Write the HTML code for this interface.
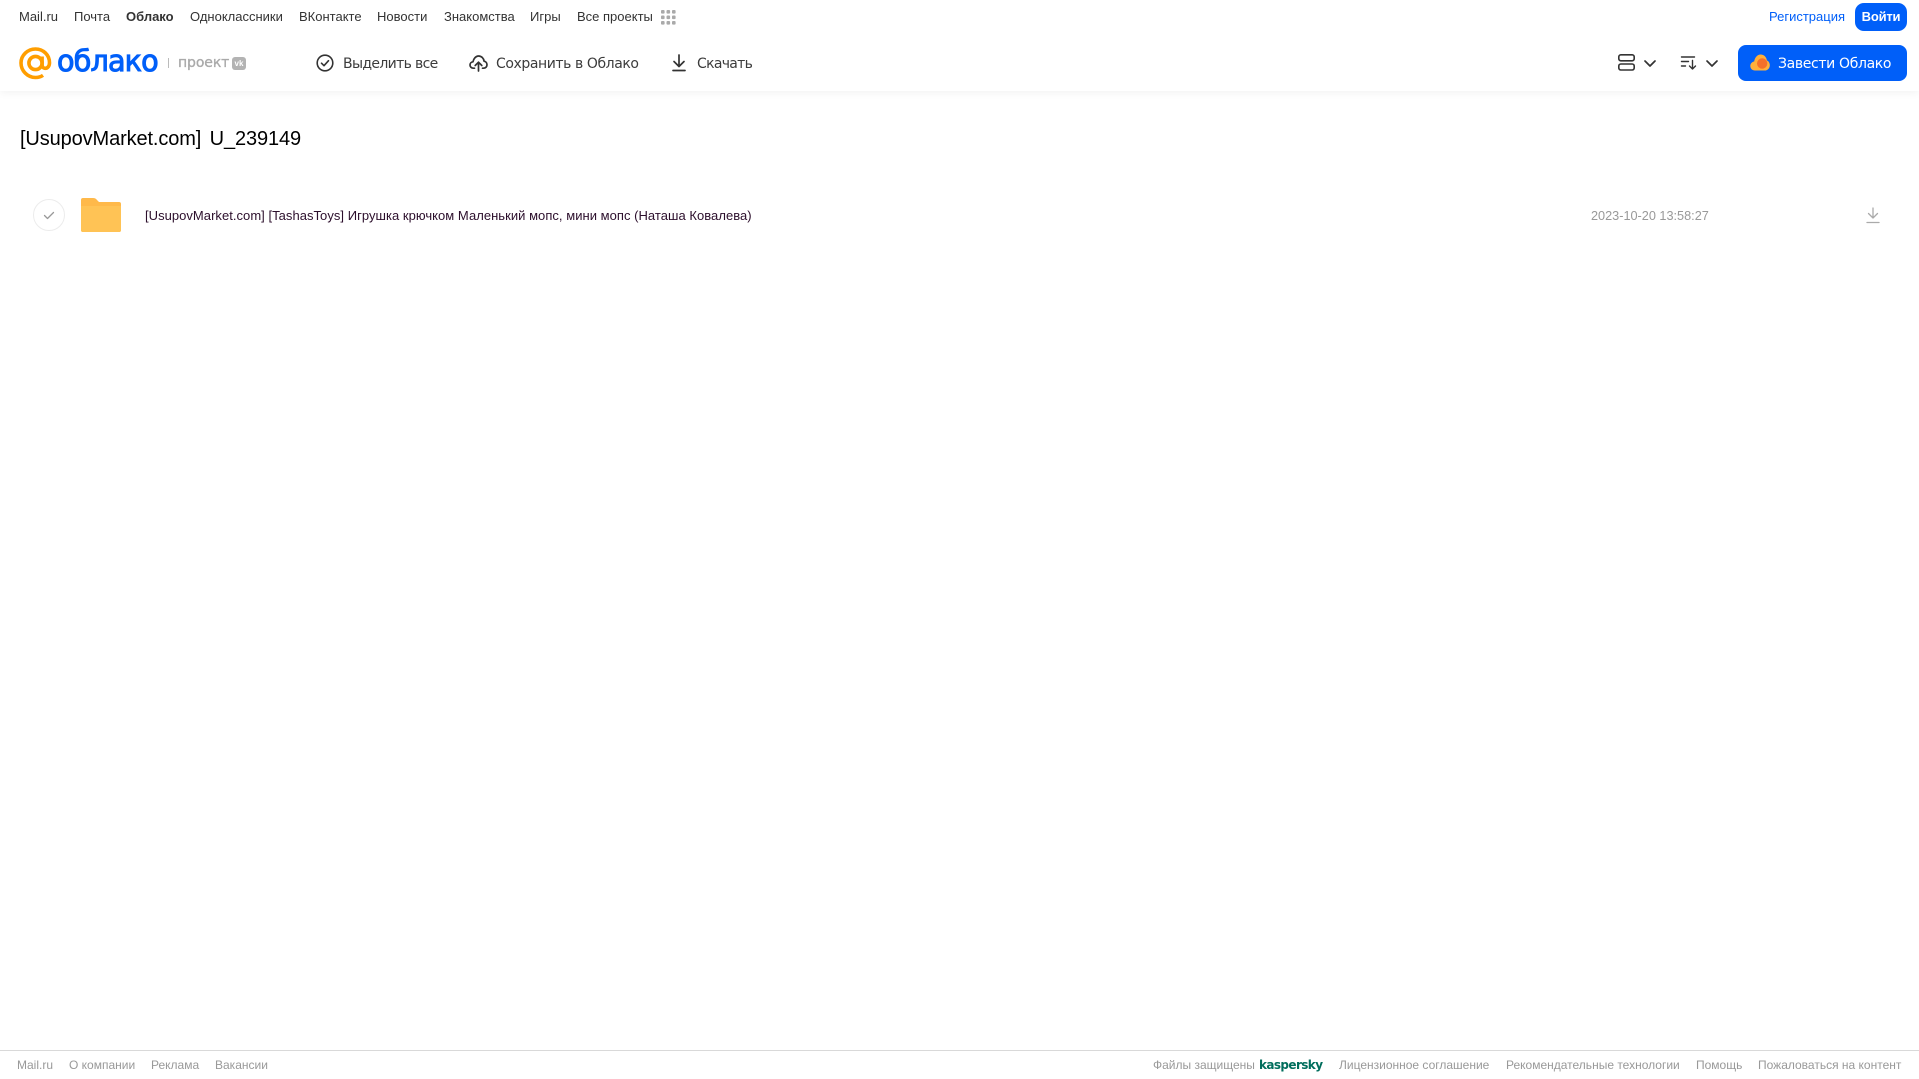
<!DOCTYPE html>
<html lang="ru"><head><meta charset="utf-8"><title>Облако</title>
<style>
html,body{margin:0;padding:0;background:#fff;width:1919px;height:1079px;overflow:hidden}
body{position:relative;font-family:"Liberation Sans",sans-serif}
.t{position:absolute;white-space:nowrap;line-height:20px;height:20px}
.n{font-size:13px;color:#333;top:7px}
.a{font-family:"DejaVu Sans",sans-serif;font-size:14px;color:#3c3c3c;top:54px;letter-spacing:-.35px}
.f{font-size:12px;color:#999;top:1055px}
svg{position:absolute;overflow:visible}
#hdr{position:absolute;left:0;top:0;width:1919px;height:91px;background:#fff;box-shadow:0 2px 8px rgba(0,0,0,.05)}
</style></head><body>
<div id="hdr"></div>
<span class="t n" style="left:19px">Mail.ru</span>
<span class="t n" style="left:74px">Почта</span>
<span class="t n" style="left:126px;font-weight:bold">Облако</span>
<span class="t n" style="left:190px">Одноклассники</span>
<span class="t n" style="left:299px">ВКонтакте</span>
<span class="t n" style="left:377px">Новости</span>
<span class="t n" style="left:444px">Знакомства</span>
<span class="t n" style="left:530px">Игры</span>
<span class="t n" style="left:577px">Все проекты</span>
<svg style="left:661px;top:10px" width="15" height="15" fill="#aaa"><rect x="0" y="0" width="3.6" height="3.6" rx="1"/><rect x="5.5" y="0" width="3.6" height="3.6" rx="1"/><rect x="11" y="0" width="3.6" height="3.6" rx="1"/><rect x="0" y="5.5" width="3.6" height="3.6" rx="1"/><rect x="5.5" y="5.5" width="3.6" height="3.6" rx="1"/><rect x="11" y="5.5" width="3.6" height="3.6" rx="1"/><rect x="0" y="11" width="3.6" height="3.6" rx="1"/><rect x="5.5" y="11" width="3.6" height="3.6" rx="1"/><rect x="11" y="11" width="3.6" height="3.6" rx="1"/></svg>
<span class="t n" style="left:1769px;color:#005ff9">Регистрация</span>
<div style="position:absolute;left:1855px;top:3px;width:52px;height:28px;border-radius:9px;background:#005ff9;color:#fff;font-size:13px;font-weight:bold;letter-spacing:-.2px;line-height:27px;text-align:center">Войти</div>

<svg style="left:19px;top:47px" width="33" height="33" viewBox="0 0 33 33" fill="none" stroke="#ff9e00" stroke-width="3.6"><circle cx="16.5" cy="16" r="6.6"/><path d="M23.1 9.5v8.2c0 2.2 1.3 3.6 3.2 3.6 2.3 0 4.2-2.3 4.2-5.6C30.5 8 24.3 2 16.5 2S2 8.3 2 16s6.4 14.5 14.5 14.5c3 0 5.5-.8 7.500-2.200"/></svg>
<span class="t" style="left:57px;top:46px;font:normal 29px/30px 'DejaVu Sans',sans-serif;height:30px;color:#005ff9;-webkit-text-stroke:1px #005ff9;letter-spacing:-.9px;transform-origin:0 50%;transform:scaleX(.99)">облако</span>
<div style="position:absolute;left:168px;top:58px;width:1px;height:10px;background:#bbb"></div>
<span class="t" style="left:178px;top:53px;font:normal 14px/20px 'DejaVu Sans',sans-serif;color:#aaa;-webkit-text-stroke:.35px #aaa;letter-spacing:-.1px">проект</span>
<div style="position:absolute;left:232px;top:57px;width:14px;height:13px;border-radius:3px;background:#b3b3b3;color:#fff;font:bold 8px/13px 'Liberation Sans',sans-serif;text-align:center">vk</div>

<svg style="left:316px;top:54px" width="18" height="18" viewBox="0 0 18 18" fill="none" stroke="#333" stroke-width="1.6"><circle cx="9" cy="9" r="7.8"/><path d="M5.5 9.2l2.5 2.5 4.5-5" stroke-linecap="round" stroke-linejoin="round"/></svg>
<span class="t a" style="left:343px;letter-spacing:-.65px">Выделить все</span>
<svg style="left:469px;top:54px" width="19" height="18" viewBox="0 0 19 18" fill="none" stroke="#333" stroke-width="1.7" stroke-linecap="round" stroke-linejoin="round"><path d="M5.5 14.2H4.3C2.4 14.2 1 12.8 1 11c0-1.700 1.300-3.100 3-3.200C4.500 4.700 6.800 2 9.600 2c2.900 0 5.100 2.300 5.500 5.200 1.700.3 2.900 1.800 2.900 3.600 0 1.900-1.500 3.400-3.400 3.400h-1.100"/><path d="M9.5 17V8.500M6.200 11.500l3.300-3.300 3.300 3.300"/></svg>
<span class="t a" style="left:496px;letter-spacing:-.42px">Сохранить в Облако</span>
<svg style="left:671px;top:54px" width="16" height="18" viewBox="0 0 16 18" fill="none" stroke="#333" stroke-width="1.7" stroke-linecap="round" stroke-linejoin="round"><path d="M8 1v11M3 7.500L8 12.500l5-5"/><path d="M2 16.500h12"/></svg>
<span class="t a" style="left:697px;letter-spacing:-.7px">Скачать</span>

<svg style="left:1618px;top:54px" width="17" height="17" viewBox="0 0 17 17" fill="none" stroke="#333" stroke-width="1.6"><rect x=".8" y=".8" width="15.400" height="6" rx="2"/><rect x=".8" y="10" width="15.400" height="6" rx="2"/></svg>
<svg style="left:1644px;top:60px" width="12" height="7" viewBox="0 0 12 7" fill="none" stroke="#333" stroke-width="1.7" stroke-linecap="round" stroke-linejoin="round"><path d="M1 1l5 5 5-5"/></svg>
<svg style="left:1681px;top:56px" width="16" height="14" viewBox="0 0 16 14" fill="none" stroke="#333" stroke-width="1.4" stroke-linecap="round" stroke-linejoin="round"><path d="M.5 1h13M.5 5.500h7M.5 10h4"/><path d="M11.500 4.500v8.500M8.500 10l3 3 3-3"/></svg>
<svg style="left:1706px;top:60px" width="12" height="7" viewBox="0 0 12 7" fill="none" stroke="#333" stroke-width="1.7" stroke-linecap="round" stroke-linejoin="round"><path d="M1 1l5 5 5-5"/></svg>

<div style="position:absolute;left:1738px;top:45px;width:169px;height:36px;border-radius:8px;background:#005ff9"></div>
<svg style="left:1750px;top:54px" width="20" height="17" viewBox="0 0 20 17"><path d="M5 16.500C2.200 16.500.3 14.500.3 12c0-2.300 1.700-4.200 3.900-4.500C4.700 3.500 7.500.5 10.600.5c3.500 0 6 2.800 6.300 6 1.700.6 2.900 2.500 2.900 4.700 0 3-2.200 5.300-5 5.300z" fill="#ffb03b"/><circle cx="12.200" cy="9.500" r="5.200" fill="#f5702a"/></svg>
<span class="t a" style="left:1778px;color:#fff">Завести Облако</span>

<span class="t" style="left:20px;top:127px;font-size:20px;line-height:24px;height:24px;color:#000;letter-spacing:-.12px;word-spacing:3px">[UsupovMarket.com] U_239149</span>

<div style="position:absolute;left:33px;top:199px;width:30px;height:30px;border:1px solid #ececec;border-radius:50%"></div>
<svg style="left:43px;top:211px" width="12" height="9" viewBox="0 0 12 9" fill="none" stroke="#999" stroke-width="1.3" stroke-linecap="round" stroke-linejoin="round"><path d="M1.500 4.500l3 3 6-6"/></svg>
<svg style="left:81px;top:198px" width="40" height="34" viewBox="0 0 40 34"><path d="M2 0h10c2 0 3 .8 4 2l2 2h20a2 2 0 0 1 2 2v26a2 2 0 0 1-2 2H2a2 2 0 0 1-2-2V2a2 2 0 0 1 2-2z" fill="#ffb94a"/><path d="M0 8h40v24a2 2 0 0 1-2 2H2a2 2 0 0 1-2-2z" fill="#ffc355"/></svg>
<span class="t" style="left:145px;top:206px;font-size:13px;letter-spacing:.035px;color:#2c0f2c">[UsupovMarket.com] [TashasToys] Игрушка крючком Маленький мопс, мини мопс (Наташа Ковалева)</span>
<span class="t" style="left:1591px;top:206px;font-size:12.7px;color:#999">2023-10-20 13:58:27</span>
<svg style="left:1866px;top:207px" width="14" height="17" viewBox="0 0 14 17" fill="none" stroke="#aaa" stroke-width="1.3" stroke-linecap="round" stroke-linejoin="round"><path d="M7 1v10M2.500 6.500L7 11l4.500-4.500"/><path d="M1 15.500h12"/></svg>

<div style="position:absolute;left:0;top:1050px;width:1919px;height:1px;background:#d9d9d9"></div>
<span class="t f" style="left:17px">Mail.ru</span>
<span class="t f" style="left:69px">О компании</span>
<span class="t f" style="left:151px">Реклама</span>
<span class="t f" style="left:215px">Вакансии</span>
<span class="t f" style="left:1153px">Файлы защищены</span>
<span class="t f" style="left:1259px;color:#006d5c;font:bold 12px/20px 'DejaVu Sans',sans-serif;letter-spacing:-.6px">kaspersky</span>
<span class="t f" style="left:1339px">Лицензионное соглашение</span>
<span class="t f" style="left:1506px">Рекомендательные технологии</span>
<span class="t f" style="left:1696px">Помощь</span>
<span class="t f" style="left:1758px">Пожаловаться на контент</span>
</body></html>
